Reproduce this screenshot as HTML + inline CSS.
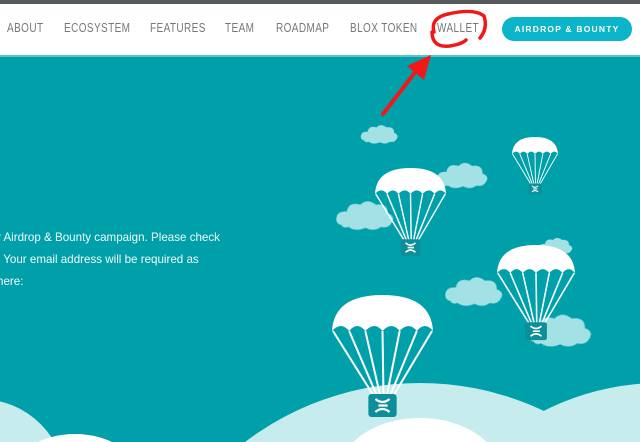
<!DOCTYPE html>
<html><head><meta charset="utf-8"><style>
*{margin:0;padding:0;box-sizing:border-box}
html,body{width:640px;height:442px;overflow:hidden}
body{background:#00a0aa;font-family:"Liberation Sans",sans-serif;position:relative}
.top{position:absolute;left:0;top:0;width:640px;height:4px;background:#55585c}
.hdr{position:absolute;left:0;top:4px;width:640px;height:53px;background:#fff;border-bottom:2px solid #5bc3c9}
.nav{position:absolute;top:21px;font-size:12.5px;color:#777;letter-spacing:0.5px;transform:scaleX(0.8);transform-origin:left;white-space:nowrap}
.btn{position:absolute;left:502px;top:17px;width:130px;height:24px;border-radius:12px;background:#0bb4c8;color:#fff;font-size:8.5px;font-weight:bold;letter-spacing:1.2px;text-align:center;line-height:24px}
.txt{position:absolute;left:-3px;color:#f2fbfb;font-size:11.6px;white-space:nowrap}
svg{position:absolute;left:0;top:0;overflow:hidden}
</style></head><body>
<div class="top"></div>
<div class="hdr"></div>
<div class="nav" style="left:7px">ABOUT</div>
<div class="nav" style="left:64px">ECOSYSTEM</div>
<div class="nav" style="left:150px">FEATURES</div>
<div class="nav" style="left:225px">TEAM</div>
<div class="nav" style="left:276px">ROADMAP</div>
<div class="nav" style="left:350px">BLOX TOKEN</div>
<div class="nav" style="left:437px">WALLET</div>
<div class="btn">AIRDROP &amp; BOUNTY</div>
<div class="txt" style="top:231px">r Airdrop &amp; Bounty campaign. Please check</div>
<div class="txt" style="top:253px">: Your email address will be required as</div>
<div class="txt" style="top:275px">here:</div>
<svg width="640" height="442" viewBox="0 0 640 442">
<defs>
<g id="cl">
<path d="M8 32 Q0 30 2 22 Q4 15 14 16 Q16 4 30 8 Q38 0 48 8 Q62 6 62 18 Q72 22 66 30 Q62 36 54 34 Q46 40 36 35 Q24 40 16 34 Q10 36 8 32Z" fill="#a3e1e5" stroke="#5ccbd6" stroke-width="1" stroke-dasharray="2 1.5"/>
</g>
<g id="pc">
<path d="M0 36 Q2 0 50 0 Q98 0 100 36 Q92 26 84 36 Q76 26 67 36 Q59 26 50 36 Q42 26 33 36 Q25 26 17 36 Q9 26 0 36Z" fill="#fff"/>
<g stroke="#fff" stroke-width="2" fill="none">
<path d="M1 36 L42 102"/><path d="M17 36 L45 102"/><path d="M33 36 L48 102"/><path d="M50 36 L51 102"/><path d="M67 36 L54 102"/><path d="M84 36 L57 102"/><path d="M99 36 L60 102"/>
</g>
<rect x="36" y="99" width="28" height="23" rx="3" fill="#0c8f9a"/>
<path d="M43 104 Q50 110 57 104 M43 117 Q50 111 57 117 M46 110.5 L55 110.5" stroke="#fff" stroke-width="2.2" fill="none"/>
</g>
</defs>
<use href="#cl" transform="translate(360,123) scale(0.55)"/>
<use href="#cl" transform="translate(436,160) scale(0.75)"/>
<use href="#cl" transform="translate(335,198) scale(0.85)"/>
<use href="#cl" transform="translate(538,236) scale(0.5)"/>
<use href="#cl" transform="translate(444,274) scale(0.85)"/>
<use href="#cl" transform="translate(526,311) scale(0.95)"/>
<circle cx="-20" cy="485" r="86" fill="#c6ecee"/>
<circle cx="420" cy="672" r="289" fill="#c6ecee"/>
<circle cx="660" cy="640" r="257" fill="#c6ecee"/>
<ellipse cx="75" cy="472" rx="60" ry="38" fill="#fff"/>
<ellipse cx="420" cy="472" rx="80" ry="54" fill="#fff"/>
<use href="#pc" transform="translate(375,168) scale(0.71,0.72)"/>
<use href="#pc" transform="translate(512,137) scale(0.46,0.47)"/>
<use href="#pc" transform="translate(497,245) scale(0.78,0.78)"/>
<use href="#pc" transform="translate(332,295) scale(1.01,1.0)"/>
<path d="M434 32 Q430 18 448 14 Q474 8 484 16 Q488 28 480 38 M432 32 Q432 48 450 46 Q462 44 466 40" stroke="#f01818" stroke-width="3.5" fill="none" stroke-linecap="round"/>
<path d="M383 114 L420 66" stroke="#f01818" stroke-width="4" stroke-linecap="round"/>
<path d="M431 55 L407 66 L424 80 Z" fill="#f01818"/>
</svg>
</body></html>
